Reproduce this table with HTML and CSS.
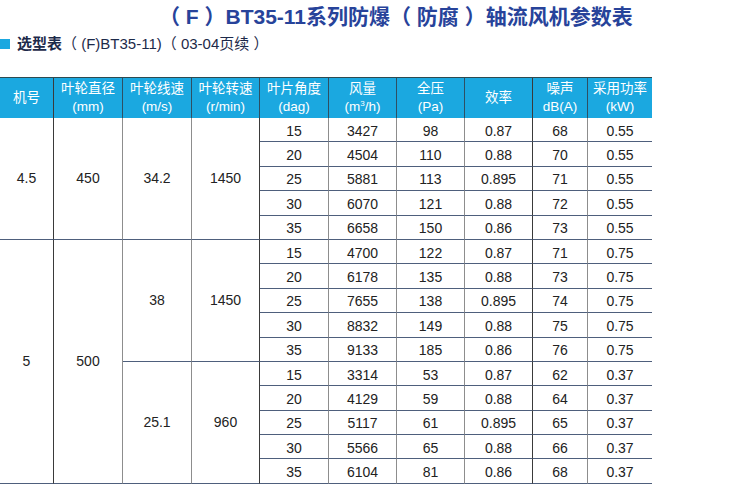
FILE: index.html
```html
<!DOCTYPE html>
<html lang="zh">
<head>
<meta charset="utf-8">
<link rel="stylesheet" href="styles.css">
</head>
<body>
<div class="page">
  <h1 class="title">（ F ）BT35-11系列防爆（ 防腐 ）轴流风机参数表</h1>
  <div class="sub"><span class="sq"></span><b>选型表</b>（ (F)BT35-11)（ 03-04页续 ）</div>
  <div class="grid">
    <div class="h dk"><span>机号</span></div>
    <div class="h"><span>叶轮直径<br>(mm)</span></div>
    <div class="h"><span>叶轮线速<br>(m/s)</span></div>
    <div class="h"><span>叶轮转速<br>(r/min)</span></div>
    <div class="h"><span>叶片角度<br>(dag)</span></div>
    <div class="h"><span>风量<br>(m<sup>3</sup>/h)</span></div>
    <div class="h"><span>全压<br>(Pa)</span></div>
    <div class="h dk"><span>效率</span></div>
    <div class="h"><span>噪声<br>dB(A)</span></div>
    <div class="h last"><span>采用功率<br>(kW)</span></div>

    <div class="c s5 g dk">4.5</div><div class="c s5 g">450</div><div class="c s5 g">34.2</div><div class="c s5 g dk">1450</div>
    <div class="c">15</div><div class="c">3427</div><div class="c">98</div><div class="c dk">0.87</div><div class="c">68</div><div class="c last">0.55</div>
    <div class="c">20</div><div class="c">4504</div><div class="c">110</div><div class="c dk">0.88</div><div class="c">70</div><div class="c last">0.55</div>
    <div class="c">25</div><div class="c">5881</div><div class="c">113</div><div class="c dk">0.895</div><div class="c">71</div><div class="c last">0.55</div>
    <div class="c">30</div><div class="c">6070</div><div class="c">121</div><div class="c dk">0.88</div><div class="c">72</div><div class="c last">0.55</div>
    <div class="c">35</div><div class="c">6658</div><div class="c">150</div><div class="c dk">0.86</div><div class="c">73</div><div class="c last">0.55</div>

    <div class="c s10 g dk">5</div><div class="c s10 g">500</div><div class="c s5 g">38</div><div class="c s5 g dk">1450</div>
    <div class="c">15</div><div class="c">4700</div><div class="c">122</div><div class="c dk">0.87</div><div class="c">71</div><div class="c last">0.75</div>
    <div class="c">20</div><div class="c">6178</div><div class="c">135</div><div class="c dk">0.88</div><div class="c">73</div><div class="c last">0.75</div>
    <div class="c">25</div><div class="c">7655</div><div class="c">138</div><div class="c dk">0.895</div><div class="c">74</div><div class="c last">0.75</div>
    <div class="c">30</div><div class="c">8832</div><div class="c">149</div><div class="c dk">0.88</div><div class="c">75</div><div class="c last">0.75</div>
    <div class="c">35</div><div class="c">9133</div><div class="c">185</div><div class="c dk">0.86</div><div class="c">76</div><div class="c last">0.75</div>

    <div class="c s5 g">25.1</div><div class="c s5 g dk">960</div>
    <div class="c">15</div><div class="c">3314</div><div class="c">53</div><div class="c dk">0.87</div><div class="c">62</div><div class="c last">0.37</div>
    <div class="c">20</div><div class="c">4129</div><div class="c">59</div><div class="c dk">0.88</div><div class="c">64</div><div class="c last">0.37</div>
    <div class="c">25</div><div class="c">5117</div><div class="c">61</div><div class="c dk">0.895</div><div class="c">65</div><div class="c last">0.37</div>
    <div class="c">30</div><div class="c">5566</div><div class="c">65</div><div class="c dk">0.88</div><div class="c">66</div><div class="c last">0.37</div>
    <div class="c">35</div><div class="c">6104</div><div class="c">81</div><div class="c dk">0.86</div><div class="c">68</div><div class="c last">0.37</div>
  </div>
</div>
</body>
</html>
```

FILE: styles.css
```css
html, body {
  margin: 0;
  padding: 0;
  background: #ffffff;
}
.page {
  width: 750px;
  height: 486px;
  overflow: hidden;
  display: flex;
  flex-direction: column;
  font-family: "Liberation Sans", "Noto Sans CJK SC", sans-serif;
}
.title {
  margin: 0;
  padding: 5px 0 0 159px;
  height: 24px;
  line-height: 24px;
  font-size: 21px;
  font-weight: bold;
  color: #27439a;
  white-space: nowrap;
}
.sub {
  margin-top: 6px;
  height: 18px;
  line-height: 18px;
  display: flex;
  align-items: center;
  font-size: 15px;
  color: #1d2a4a;
  white-space: nowrap;
}
.sub b {
  font-weight: bold;
  margin-left: 7px;
}
.sq {
  width: 10px;
  height: 10px;
  background: #1ba8e0;
}
.grid {
  margin-top: 24px;
  width: 652px;
  display: grid;
  grid-template-columns: 54px 69px 69px 68px 69px 68px 68px 68px 55px 64px;
  grid-template-rows: 40px repeat(15, 24.4px);
  border-top: 1px solid #2d4a50;
}
.h {
  background: #1ba8e0;
  color: #ffffff;
  font-size: 13.5px;
  line-height: 18px;
  display: flex;
  align-items: center;
  justify-content: center;
  text-align: center;
  border-right: 1px solid #2e4f63;
  box-sizing: border-box;
  padding-bottom: 1px;
}
.h sup {
  font-size: 8px;
  line-height: 0;
  vertical-align: 5px;
}
.c {
  display: flex;
  align-items: center;
  justify-content: center;
  font-size: 14px;
  color: #222222;
  border-right: 1px solid #8d8d8d;
  border-bottom: 1px solid #4e5f7c;
  box-sizing: border-box;
  padding-top: 2px;
}
.dk {
  border-right-color: #3a3a3a;
}
.last {
  border-right: none;
}
.s5 {
  grid-row: span 5;
}
.s10 {
  grid-row: span 10;
}
.g {
  padding-top: 0;
}
```
